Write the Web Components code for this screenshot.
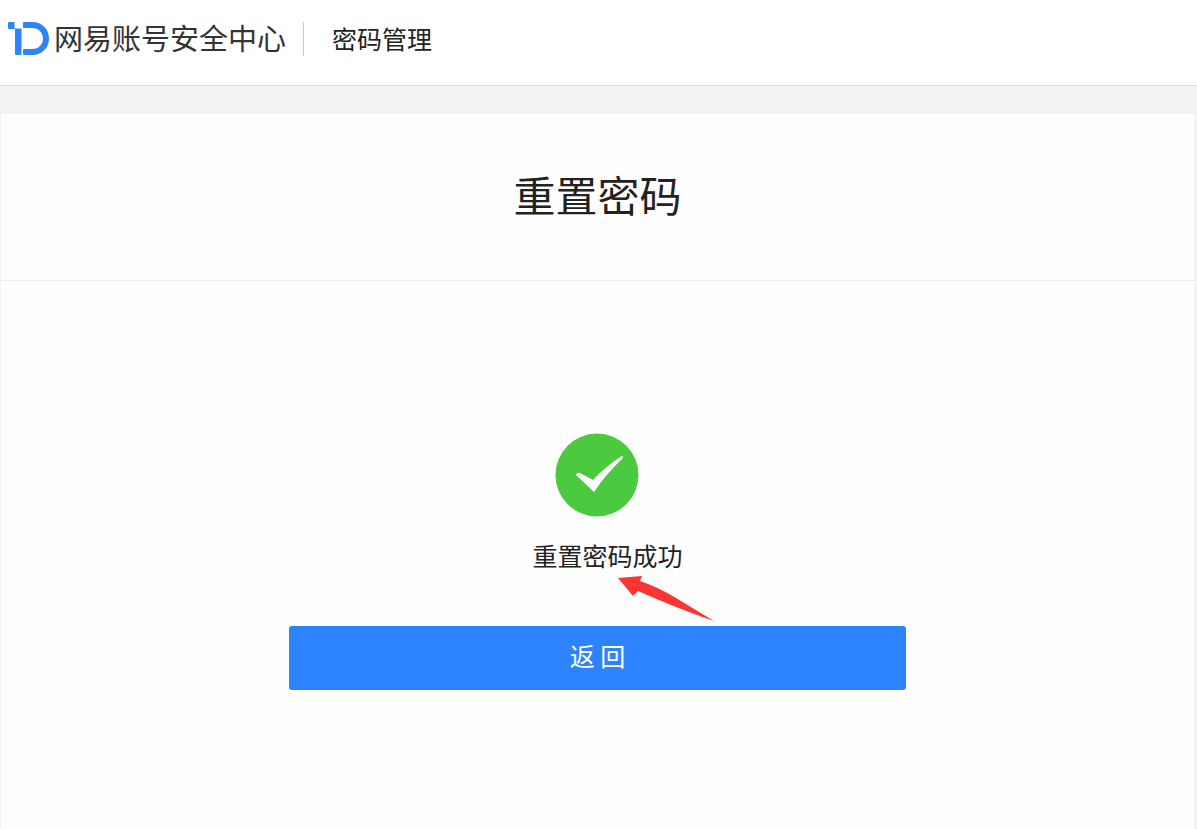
<!DOCTYPE html>
<html lang="zh-CN">
<head>
<meta charset="utf-8">
<meta name="viewport" content="width=device-width, initial-scale=1">
<title>网易账号安全中心 - 密码管理</title>
<style>
html, body { margin: 0; }
body { font-family: "Noto Sans CJK SC", sans-serif; color: #222; background: #f2f2f2; }
</style>
</head>
<body>
<account-page>
  <site-header slot="header" section="密码管理"></site-header>
  <panel-card heading="重置密码">
    <result-status>重置密码成功</result-status>
    <action-button>返 回</action-button>
  </panel-card>
</account-page>
<script>
function define(name, html, setup) {
  const template = document.createElement('template');
  template.innerHTML = html;
  customElements.define(name, class extends HTMLElement {
    constructor() {
      super();
      this.attachShadow({ mode: 'open' }).append(template.content.cloneNode(true));
    }
    connectedCallback() { if (setup) setup(this, this.shadowRoot); }
  });
}

define('account-page', `
<style>
:host { display: flex; flex-direction: column; min-height: 100vh; }
main { flex: 1; display: flex; flex-direction: column; padding: 28px 3px 0 1px; }
</style>
<slot name="header"></slot>
<main><slot></slot></main>`);

define('brand-logo', `
<style>
:host { display: block; }
a { display: flex; align-items: flex-start; gap: 5px; color: #333; text-decoration: none; font-size: 29px; line-height: 30px; white-space: nowrap; }
svg { display: block; }
</style>
<a href="#">
  <svg width="41" height="34" viewBox="0 0 41 34" fill="#2d82fe" aria-hidden="true">
    <path d="M1 0H5.500Q6.500 0 6.500 1V6.500H12.500Q13.500 6.500 13.500 7.500V32Q13.500 33 12.500 33H8Q7 33 7 32V7H1Q0 7 0 6V1Q0 0 1 0Z"/>
    <path d="M16 0H24C34 0 41 7 41 16.500S34 33 24 33H16Q15 33 15 32V28Q15 27 16 27H24C31 27 35 22 35 16.500S31 6 24 6H16Q15 6 15 5V1Q15 0 16 0Z"/>
  </svg>
  <span>网易账号安全中心</span>
</a>`);

define('site-header', `
<style>
:host { display: block; background: #fff; border-bottom: 1px solid #dcdedd; }
header { display: flex; align-items: center; padding: 22px 8px 29px; }
.section { margin-left: 17px; padding: 0 0 2px 28px; border-left: 1px solid #ccc; font-size: 25px; line-height: 32px; }
</style>
<header><brand-logo></brand-logo><span class="section"></span></header>`,
(host, root) => { root.querySelector('.section').textContent = host.getAttribute('section'); });

define('panel-card', `
<style>
:host { flex: 1; display: flex; flex-direction: column; background: #fefefe; }
h1 { margin: 0; padding: 50px 16px 56px; border-bottom: 1px solid #ebebeb; font-size: 42px; line-height: 60px; font-weight: 400; text-align: center; }
.body { display: flex; flex-direction: column; align-items: center; padding: 152px 16px 48px; }
</style>
<h1></h1>
<div class="body"><slot></slot></div>`,
(host, root) => { root.querySelector('h1').textContent = host.getAttribute('heading'); });

define('result-status', `
<style>
:host { display: flex; flex-direction: column; align-items: center; }
svg { display: block; }
.message { position: relative; margin: 20px 0 0; padding-left: 20px; font-size: 25px; line-height: 36px; }
.arrow { position: absolute; left: 106px; top: 39px; }
</style>
<svg width="84" height="84" viewBox="0 0 84 84" aria-hidden="true">
  <circle cx="42" cy="42" r="41.500" fill="#4bc93f"/>
  <path d="M21 42Q22 39 25 40L38 47Q52 32 67 23Q68 23 68 25Q51 41 39 59Z" fill="#fff"/>
</svg>
<p class="message" role="status"><slot></slot>
  <svg class="arrow" width="98" height="46" viewBox="0 0 98 46" aria-hidden="true">
    <path d="M0 2L24 0L22 5Q40 11 58 22L96 45Q58 32 20 15L15 20Z" fill="#fc3534"/>
  </svg>
</p>`);

define('action-button', `
<style>
:host { display: block; width: 100%; max-width: 617px; margin-top: 53px; }
button { display: block; width: 100%; padding: 11px 14px 17px; border: 0; border-radius: 3px; background: #2d82fe; color: #fff; font: inherit; font-size: 25px; line-height: 36px; cursor: pointer; }
button:hover { background: #1c74f5; }
</style>
<button type="button"><slot></slot></button>`);
</script>
</body>
</html>
